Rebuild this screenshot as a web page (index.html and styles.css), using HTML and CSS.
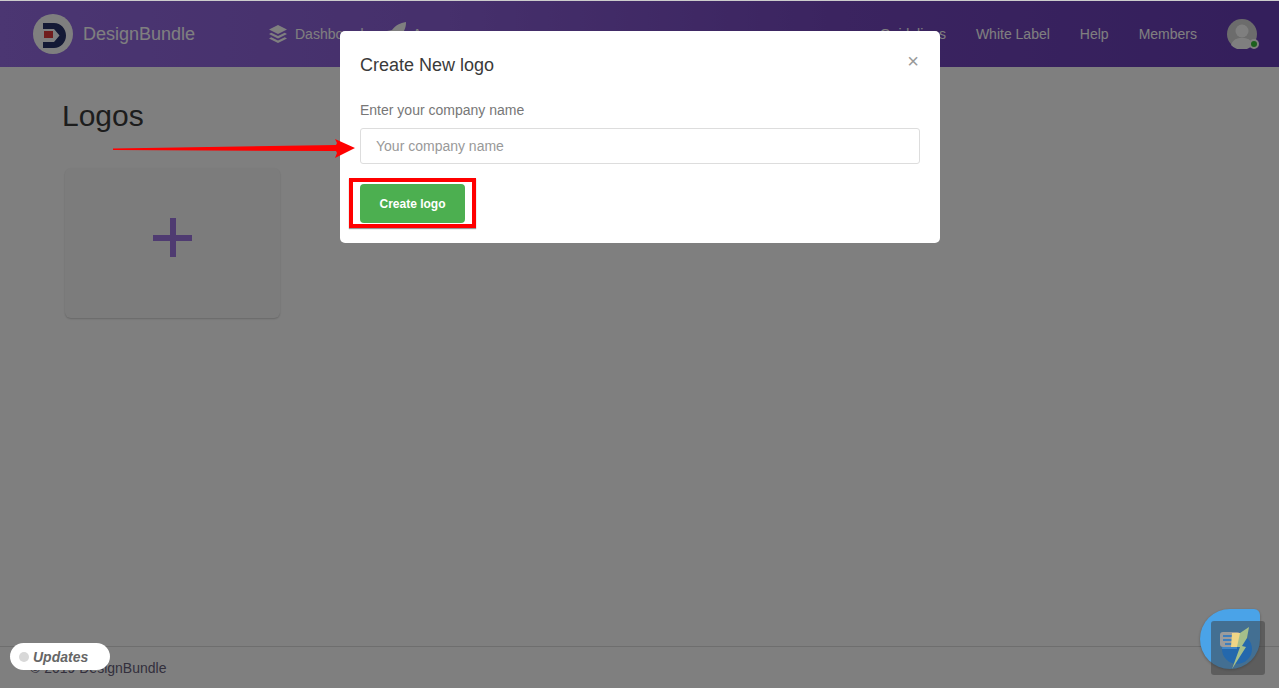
FILE: index.html
```html
<!DOCTYPE html>
<html lang="en">
<head>
<meta charset="utf-8">
<title>Logos</title>
<link rel="stylesheet" href="styles.css">
</head>
<body>
<div class="page">
  <header class="topbar">
    <a class="brand">
      <span class="brand-mark">
        <svg width="23" height="25" viewBox="0 0 23 25"><path d="M0 0H11C18 0 23 6 23 12.500S18 25 11 25H0V19H11L16.500 12.500 11 6H0Z" fill="#28336a"/><rect x="1" y="8" width="9" height="7" fill="#e03a3a"/></svg>
      </span>
      <span class="brand-name">DesignBundle</span>
    </a>
    <nav class="nav-left">
      <a class="nav-item">
        <svg class="nav-icon" width="20" height="20" viewBox="0 0 20 20"><path d="M10 1 19 5.500 10 10 1 5.500Z M3.300 8.700 10 12 16.700 8.700 19 10 10 14.500 1 10Z M3.300 13.200 10 16.500 16.700 13.200 19 14.500 10 19 1 14.500Z" fill="#fff"/></svg>
        Dashboard
      </a>
      <a class="nav-item">
        <svg class="nav-icon" width="20" height="24" viewBox="0 0 20 24"><path d="M20 0C14 1 10 3 6 8L1 9 0 13 5 13 9 17V22L13 19 14 14C18 10 20 6 20 0Z" fill="#fff"/></svg>
        Apps
      </a>
    </nav>
    <nav class="nav-right">
      <a class="nav-link">Guidelines</a>
      <a class="nav-link">White Label</a>
      <a class="nav-link">Help</a>
      <a class="nav-link">Members</a>
      <span class="avatar">
        <svg width="30" height="30" viewBox="0 0 30 30"><circle cx="15" cy="15" r="15" fill="#d8d8d8"/><circle cx="15" cy="12" r="6.500" fill="#fff"/><path d="M4 26C6 20 10 19 15 19S24 20 26 26A15 15 0 0 1 4 26Z" fill="#fff"/></svg>
        <span class="status-dot"></span>
      </span>
    </nav>
  </header>

  <main class="content">
    <h1 class="page-title">Logos</h1>
    <div class="logo-grid">
      <a class="add-card"><span class="plus"></span></a>
    </div>
  </main>

  <footer class="footer">© 2019 DesignBundle</footer>
</div>

<div class="backdrop"></div>

<div class="modal">
  <div class="modal-head">
    <h2 class="modal-title">Create New logo</h2>
    <span class="modal-close">×</span>
  </div>
  <label class="field-label">Enter your company name</label>
  <input class="field-input" type="text" placeholder="Your company name">
  <div class="modal-actions">
    <button class="btn-create">Create logo</button>
  </div>
</div>

<svg class="annot-arrow" width="243" height="24" viewBox="0 0 243 24"><path d="M0 10.500 223 7 224 5 222 1 242 10 222 20 224 15 223 13 0 12Z" fill="#f00"/></svg>

<a class="updates"><span class="updates-dot"></span>Updates</a>

<div class="chat"></div>
<div class="to-top"></div>
<svg class="chat-icon" width="36" height="44" viewBox="0 0 36 44">
  <circle cx="18" cy="22" r="15" fill="#2468ad"/>
  <path d="M3 22A15 15 0 0 1 18 7V22Z" fill="#3f86c8"/>
  <rect x="1" y="5" width="20" height="15" rx="3" fill="#9c9c9c"/>
  <path d="M4 9H20M4 13H17M6 17H13" stroke="#3f7fbd" stroke-width="2"/>
  <path d="M13 6H22V20H12Z" fill="#efd586"/>
  <path d="M30 0 21 6 18 20 21 20 13 42 27 20 23 19 28 11Z" fill="#a6bf8a"/>
</svg>
</body>
</html>
```
FILE: styles.css
```css
* { box-sizing: border-box; }
html, body { margin: 0; height: 100%; }
body {
  font-family: "Liberation Sans", Arial, sans-serif;
  background: #fff;
  overflow: hidden;
  color: #333;
}
.page {
  height: 688px;
  display: flex;
  flex-direction: column;
  border-top: 1px solid #ccc;
}
.topbar {
  height: 66px;
  flex: none;
  display: flex;
  align-items: center;
  padding: 0 22px 0 33px;
  background: linear-gradient(90deg, #966ce4 0%, #8c60d8 35%, #7648c0 66%, #683eb8 100%);
  color: #fff;
}
.brand { display: flex; align-items: center; gap: 10px; width: 235px; flex: none; }
.brand-mark {
  width: 40px; height: 40px; border-radius: 50%;
  background: #fff;
  display: flex; align-items: center; justify-content: center;
  padding: 2px 0 0 2px;
}
.brand-name { font-size: 18px; }
.nav-left { display: flex; align-items: center; gap: 22px; }
.nav-item { display: flex; align-items: center; gap: 7px; font-size: 14px; }
.nav-right { margin-left: auto; display: flex; align-items: center; gap: 30px; }
.nav-link { font-size: 14px; white-space: nowrap; }
.avatar { position: relative; width: 30px; height: 30px; display: block; }
.avatar svg { display: block; }
.status-dot {
  position: absolute; right: -2px; bottom: 0;
  width: 10px; height: 10px; border-radius: 50%;
  background: #38c13a; border: 2px solid #fff;
}
.content { flex: 1; padding: 31px 0 0 62px; }
.page-title { margin: 0; font-size: 30px; font-weight: 400; line-height: 36px; color: #3a3a3a; }
.logo-grid { margin-top: 34px; padding-left: 3px; }
.add-card {
  width: 215px; height: 150px;
  display: flex; align-items: center; justify-content: center;
  border-radius: 6px;
  background: #f9f9f9;
  box-shadow: 0 1px 2px rgba(0,0,0,.2);
}
.plus { position: relative; width: 39px; height: 39px; display: block; margin-bottom: 12px; }
.plus::before, .plus::after { content: ""; position: absolute; background: #9e76e2; }
.plus::before { left: 0; right: 0; top: 17px; height: 6px; }
.plus::after { top: 0; bottom: 0; left: 17px; width: 6px; }
.footer {
  height: 42px; flex: none;
  border-top: 1px solid #ddd;
  padding: 13px 0 0 30px;
  font-size: 14px;
  color: #66607a;
}
.backdrop { position: fixed; inset: 1px 0 0; background: rgba(0,0,0,.5); }
.modal {
  position: fixed; left: 340px; top: 31px;
  width: 600px; height: 212px;
  padding: 0 20px;
  background: #fff;
  border-radius: 5px;
}
.modal-head { display: flex; justify-content: space-between; padding-top: 22px; height: 69px; }
.modal-title { margin: 0; font-size: 18px; font-weight: 400; line-height: 24px; color: #3a3a3a; }
.modal-close { font-size: 20px; line-height: 16px; color: #999; margin-right: 1px; }
.field-label { display: block; font-size: 14px; line-height: 20px; color: #777; }
.field-input {
  display: block; width: 100%; height: 36px; margin-top: 8px;
  padding: 0 15px;
  border: 1px solid #ddd; border-radius: 3px;
  font: 14px "Liberation Sans", Arial, sans-serif;
  outline: none;
}
.field-input::placeholder { color: #999; opacity: 1; }
.modal-actions { position: relative; margin-top: 20px; }
.modal-actions::before {
  content: ""; position: absolute; box-sizing: border-box;
  left: -11px; top: -6px; width: 127px; height: 50px;
  border: 4px solid #f00;
  box-shadow: 0 1px 1px rgba(0,0,0,.4);
}
.btn-create {
  position: relative; display: block;
  width: 105px; height: 39px;
  background: #4caf50; color: #fff;
  border: 0; border-radius: 4px;
  font: 700 12px "Liberation Sans", Arial, sans-serif;
}
.annot-arrow { position: fixed; left: 113px; top: 138px; }
.updates {
  position: fixed; left: 10px; top: 643px;
  width: 100px; height: 27px;
  display: flex; align-items: center; gap: 4px;
  padding-left: 9px;
  background: #fff; border-radius: 14px;
  font-size: 14px; font-weight: 700; font-style: italic; color: #666;
}
.updates-dot { width: 10px; height: 10px; border-radius: 50%; background: #d8d8d8; }
.chat {
  position: fixed; left: 1200px; top: 609px;
  width: 60px; height: 60px;
  background: #4aa3e8;
  border-radius: 50% 6px 50% 50%;
  box-shadow: 0 1px 3px rgba(0,0,0,.3);
}
.chat-icon { position: fixed; left: 1219px; top: 627px; }
.to-top {
  position: fixed; left: 1211px; top: 621px;
  width: 54px; height: 54px;
  background: rgba(60,60,60,.5);
  border-radius: 3px;
}
.chat-icon { z-index: 2; }
```
